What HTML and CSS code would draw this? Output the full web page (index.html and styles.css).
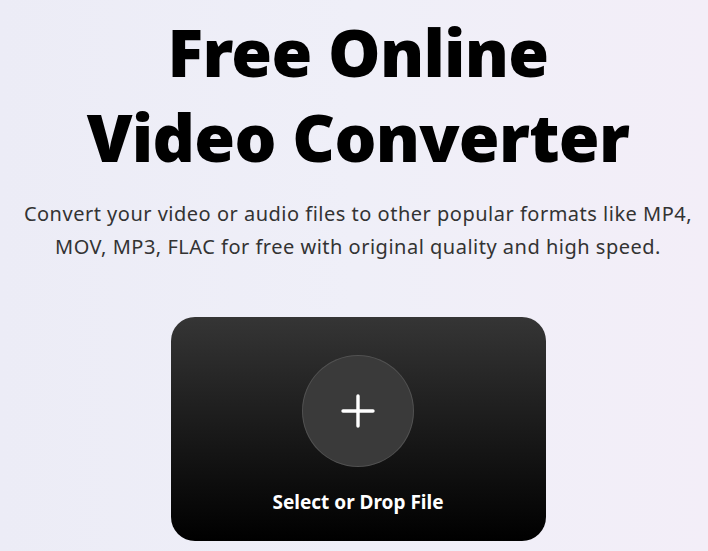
FILE: index.html
```html
<!DOCTYPE html>
<html lang="en">
<head>
<meta charset="utf-8">
<title>Free Online Video Converter</title>
<link rel="stylesheet" href="styles.css">
</head>
<body>
<main class="hero">
  <h1 class="title">Free Online<br>Video Converter</h1>
  <p class="subtitle">Convert your video or audio files to other popular formats like MP4,<br>MOV, MP3, FLAC for free with original quality and high speed.</p>
  <div class="drop">
    <div class="plus-circle">
      <svg width="34" height="34" viewBox="0 0 34 34" aria-hidden="true">
        <path d="M17 2V32M2 17H32" stroke="#fff" stroke-width="3.4" stroke-linecap="round" fill="none"/>
      </svg>
    </div>
    <div class="drop-label">Select or Drop File</div>
  </div>
</main>
</body>
</html>
```
FILE: styles.css
```css
html, body {
  margin: 0;
  padding: 0;
}
body {
  width: 708px;
  height: 551px;
  overflow: hidden;
  background: linear-gradient(90deg, #ececf6 0%, #efeff8 50%, #f3eef8 100%);
  font-family: "Noto Sans", "Open Sans", sans-serif;
  color: #000;
}
.hero {
  display: flex;
  flex-direction: column;
  align-items: center;
  padding-left: 8px;
  padding-top: 9px;
}
.title {
  margin: 0;
  font-size: 66px;
  font-weight: 900;
  line-height: 85px;
  text-align: center;
  letter-spacing: -0.7px;
}
.subtitle {
  margin: 18px 0 0;
  font-size: 20px;
  line-height: 33px;
  letter-spacing: 0.5px;
  color: #333;
  text-align: center;
}
.drop {
  margin-top: 54px;
  width: 375px;
  height: 224px;
  border-radius: 24px;
  background: linear-gradient(180deg, #353535 0%, #1a1a1a 50%, #000 100%);
  display: flex;
  flex-direction: column;
  align-items: center;
  box-sizing: border-box;
  padding-top: 38px;
}
.plus-circle {
  width: 112px;
  height: 112px;
  border-radius: 50%;
  background: #3a3a3a;
  box-shadow: inset 0 0 0 1px rgba(255,255,255,0.12);
  display: flex;
  align-items: center;
  justify-content: center;
}
.drop-label {
  margin-top: 22px;
  color: #fff;
  font-size: 19px;
  font-weight: 700;
}
```
